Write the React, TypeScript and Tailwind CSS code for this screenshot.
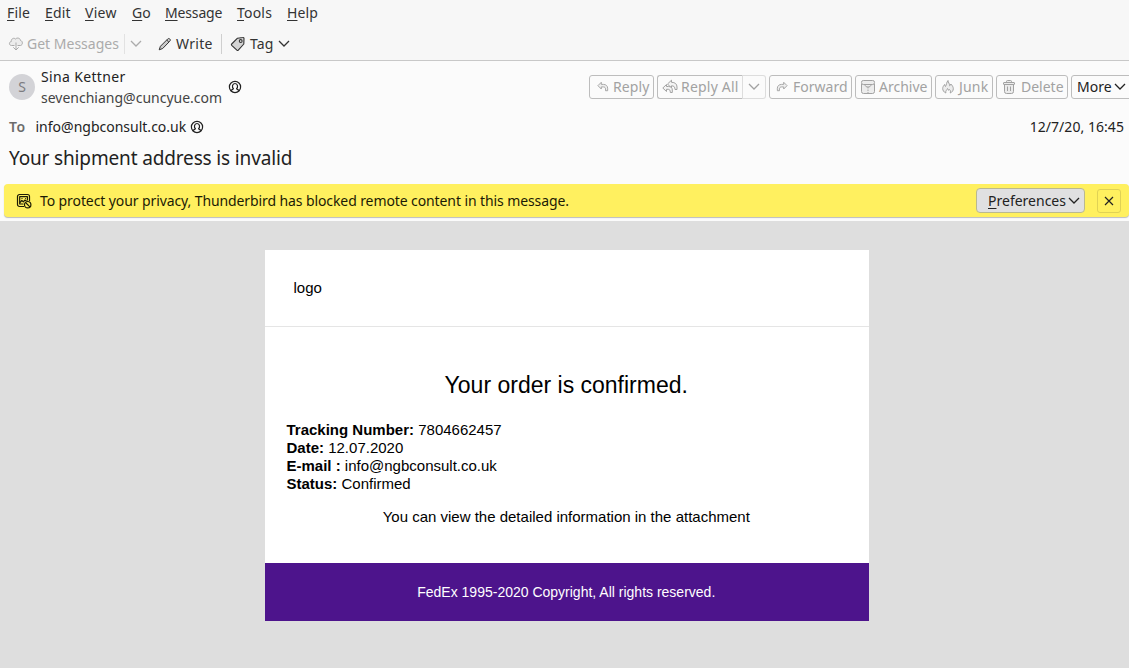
import React from "react";

type IconProps = { className?: string };

const Chevron = ({ className = "" }: IconProps) => (
  <svg viewBox="0 0 12 12" className={`h-3 w-3 shrink-0 ${className}`} fill="none" stroke="currentColor" strokeWidth="1.3">
    <path d="M1 3 6 8 11 3" />
  </svg>
);

const CloudDown = () => (
  <svg viewBox="0 0 16 16" className="h-4 w-4 shrink-0" fill="#ececec" stroke="currentColor" strokeWidth="1" strokeLinejoin="round">
    <path d="M6.500 9.500H3.500C.8 9.500.8 5.800 3.300 5.500 3 2.500 6 1.500 7.500 3 9.500 1 12.500 2.500 12.500 4.500 15 5 15 9 12.500 9.500H9.500" />
    <path d="M8 6.500v7.500M5.300 11.300 8 14l2.700-2.700" fill="none" />
  </svg>
);

const Pencil = () => (
  <svg viewBox="0 0 14 14" className="h-3.5 w-3.5 shrink-0" fill="#cccccc" stroke="currentColor" strokeWidth="1" strokeLinejoin="round">
    <path d="M1.200 12.800 2.400 9.300 9.500 2.200c.8-.9 1.700-.9 2.300-.2.700.6.700 1.500-.1 2.300L4.700 11.500ZM8.700 3l2.200 2.200" />
  </svg>
);

const TagIcon = () => (
  <svg viewBox="0 0 16 16" className="h-4 w-4 shrink-0" fill="#d4d4d4" stroke="currentColor" strokeWidth="1.100" strokeLinejoin="round">
    <path d="M7.500 2.200 12.800 1.500a1 1 0 0 1 1.200 1L13.800 8 8.300 14.200a1 1 0 0 1-1.400 0L1.700 9.400a1 1 0 0 1 0-1.400Z" />
    <circle cx="10.700" cy="5" r="1.400" fill="#f7f7f7" />
  </svg>
);

const Contact = () => (
  <svg viewBox="0 0 14 14" className="h-3.5 w-3.5 shrink-0" fill="none" stroke="#202020" strokeWidth="1.200">
    <circle cx="7" cy="7" r="5.600" />
    <path d="M2.800 10.700c.5-1.200 2.600-1 2.600-2.100C3.900 7.500 4 3.500 7 3.500s3.100 4 1.600 5.100c0 1.100 2.100.9 2.600 2.100" />
  </svg>
);

const replyShape = "M1 5.500 5 1.500v2.500h2.500C10.500 4 12.500 6 12.500 8.500V11.500H10V9.500c0-1.500-.8-2.500-2.500-2.500H5v2.500Z";

const Reply = () => (
  <svg viewBox="0 0 14 13" className="h-[11px] w-3 shrink-0" fill="#eeeeee" stroke="currentColor" strokeWidth="1.100" strokeLinejoin="round">
    <path d={replyShape} />
  </svg>
);

const Forward = () => (
  <svg viewBox="0 0 14 13" className="h-[11px] w-3 shrink-0" fill="#eeeeee" stroke="currentColor" strokeWidth="1.100" strokeLinejoin="round">
    <path d={replyShape} transform="matrix(-1 0 0 1 14 0)" />
  </svg>
);

const ReplyAll = () => (
  <svg viewBox="0 0 16 15" className="h-[15px] w-4 shrink-0" fill="#f4f4f4" stroke="currentColor" strokeLinejoin="round">
    <path d="M5.500 5 9.500 1.200V3.300C13 3.300 15 5 15 8v2.500h-2c0-2.500-1-3.700-3.500-3.700V9Z" />
    <path d="M.8 9 4.500 5.500v2H6.500c2.500 0 3.800 1.300 3.800 3.500V13.500H8.300c0-2.200-.6-3.200-2-3.200H4.500V12.500Z" />
  </svg>
);

const Archive = () => (
  <svg viewBox="0 0 16 16" className="h-4 w-4 shrink-0" fill="#ececec" stroke="currentColor" strokeLinejoin="round">
    <path d="M1.500 5v7.500a2 2 0 0 0 2 2h9a2 2 0 0 0 2-2V5" />
    <rect x="1.500" y="1.500" width="13" height="4" rx="1.800" />
    <path d="M5 5.500c0 2 1.500 2.500 3 2.500s3-.5 3-2.500" fill="none" />
    <path d="M8 8v6" strokeDasharray="1.500 1" />
  </svg>
);

const Flame = () => (
  <svg viewBox="0 0 14 16" className="h-4 w-3.5 shrink-0" fill="#ececec" stroke="currentColor" strokeLinejoin="round">
    <path d="M4.800 14C2.800 13 1.700 11.500 1.700 9.500c0-1.500.8-2.500 1.800-4 .2 1 .5 1.500 1 2C5.500 5.500 5.500 3.500 7 1.500c0 2 1.700 3 1.700 5.300.6-.3 1-1 1.100-1.800 1.500 1.500 2.500 3 2.500 4.700 0 2-1.200 3.500-3.100 4.300.6-1.700.2-2.700-.7-3.500-.4.600-.8.700-1.200.7 0-.8-.2-1.200-.8-1.700-.3 1.500-2.300 2.200-1.700 4.500Z" />
  </svg>
);

const Trash = () => (
  <svg viewBox="0 0 14 16" className="h-4 w-3.5 shrink-0" fill="#ececec" stroke="currentColor" strokeLinejoin="round">
    <path d="M4.500 3.500v-1a1 1 0 0 1 1-1h3a1 1 0 0 1 1 1v1M2.500 5.500v7a2 2 0 0 0 2 2h5a2 2 0 0 0 2-2v-7" />
    <rect x="1.500" y="3.500" width="11" height="2" rx=".5" />
    <path d="M5.500 7.500v4.500M8.500 7.500v4.500" />
  </svg>
);

const BlockedImage = () => (
  <svg viewBox="0 0 16 16" className="h-4 w-4 shrink-0" fill="none" stroke="#1c1b05" strokeWidth="1.200" strokeLinejoin="round">
    <path d="M8 13.500H3.500a2 2 0 0 1-2-2v-8a2 2 0 0 1 2-2h8a2 2 0 0 1 2 2V8" />
    <path d="M7.500 11H3.700V3.700h7.700V7.500" />
    <path d="m4 9.500 1.800-2 1.500 1.300L9 7l1.500 1M5.500 5.500h1M9 5.500h.8" />
    <circle cx="11.700" cy="11.700" r="3.200" />
    <path d="m9.500 9.500 4.400 4.400" />
  </svg>
);

const menus = [
  { label: "File", style: "w-[38px] tracking-[0.2px]" },
  { label: "Edit", style: "w-10 tracking-[0.2px]" },
  { label: "View", style: "w-[47px] tracking-[0.3px]" },
  { label: "Go", style: "w-[33px]" },
  { label: "Message", style: "w-[72px] tracking-[-0.15px]" },
  { label: "Tools", style: "w-[50px] tracking-[0.2px]" },
  { label: "Help", style: "w-10 tracking-[0.1px]" },
];

const Underlined = ({ text }: { text: string }) => (
  <>
    <span className="underline decoration-1 underline-offset-2">{text[0]}</span>
    {text.slice(1)}
  </>
);

const actionClass = "flex h-6 shrink-0 items-center whitespace-nowrap rounded-[3px] border border-[#bdbdbd] text-[#a2a2a2]";

const details = [
  ["Tracking Number:", "7804662457"],
  ["Date:", "12.07.2020"],
  ["E-mail :", "info@ngbconsult.co.uk"],
  ["Status:", "Confirmed"],
];

export default function App() {
  return (
    <div className="flex h-[668px] w-[1129px] flex-col overflow-hidden bg-[#dedede] font-['Noto_Sans',sans-serif] text-[14px] leading-5 text-[#333333]">
      <div className="h-[61px] shrink-0 border-b border-[#c8c8c8] bg-[#f7f7f7]">
        <nav className="flex h-[26px] items-center pl-[7px]">
          {menus.map((m) => (
            <span key={m.label} className={`${m.style} shrink-0 whitespace-nowrap`}>
              <Underlined text={m.label} />
            </span>
          ))}
        </nav>
        <div className="flex h-[35px] items-center whitespace-nowrap pl-2">
          <div className="flex w-[116px] shrink-0 items-center gap-[3px] text-[#ababab]">
            <CloudDown />
            <span>Get Messages</span>
          </div>
          <div className="flex h-5 w-[34px] shrink-0 items-center border-l border-[#e2e2e2] pl-[5px] text-[#ababab]">
            <Chevron />
          </div>
          <div className="flex h-5 w-[64px] shrink-0 items-center gap-1 border-r border-[#cfcfcf]">
            <Pencil />
            <span className="tracking-[0.3px]">Write</span>
          </div>
          <div className="flex items-center gap-1 pl-2">
            <TagIcon />
            <span className="w-[24px] tracking-[0.1px]">Tag</span>
            <Chevron />
          </div>
        </div>
      </div>

      <header className="flex h-[160px] shrink-0 flex-col bg-[#fbfbfb] text-[#222222]">
        <div className="flex h-[51px] items-center pl-[9px]">
          <div className="flex h-[26px] w-[26px] shrink-0 items-center justify-center rounded-full bg-[#d3d3d7] text-[#7c7c80]">S</div>
          <div className="ml-1.5 flex h-[42px] w-[187px] shrink-0 flex-col whitespace-nowrap">
            <span className="h-[21px] leading-[21px] tracking-[0.35px]">Sina Kettner</span>
            <span className="h-[21px] leading-[21px] text-[#444444]">sevenchiang@cuncyue.com</span>
          </div>
          <Contact />
          <div className="ml-[347px] flex gap-[3px]">
            <div className={`${actionClass} w-[65px] gap-1 pl-[7px]`}>
              <Reply />
              <span className="tracking-[0.1px]">Reply</span>
            </div>
            <div className="flex shrink-0">
              <div className={`${actionClass} w-[86px] gap-[3px] rounded-r-none border-r-[#dddddd] pl-1`}>
                <ReplyAll />
                <span className="tracking-[0.2px]">Reply All</span>
              </div>
              <div className="flex h-6 w-[23px] items-center rounded-r-[3px] border border-l-0 border-[#dddddd] pl-[5px] text-[#a2a2a2]">
                <Chevron />
              </div>
            </div>
            <div className={`${actionClass} w-[83px] gap-[5px] pl-1.5`}>
              <Forward />
              <span>Forward</span>
            </div>
            <div className={`${actionClass} w-[77px] gap-[3px] pl-1`}>
              <Archive />
              <span>Archive</span>
            </div>
            <div className={`${actionClass} w-[58px] gap-1 pl-[5px]`}>
              <Flame />
              <span className="tracking-[0.2px]">Junk</span>
            </div>
            <div className={`${actionClass} w-[72px] gap-[5px] pl-[5px]`}>
              <Trash />
              <span>Delete</span>
            </div>
            <div className="flex h-6 w-[64px] shrink-0 items-center rounded-[3px] border border-[#bdbdbd] pl-[5px] text-[#222222]">
              <span className="w-[37px]">More</span>
              <Chevron />
            </div>
          </div>
        </div>
        <div className="mt-[2px] flex h-[26px] items-center whitespace-nowrap pl-[9px] pr-[5px]">
          <span className="w-[26.5px] font-semibold tracking-[0.6px] text-[#6b6b6b]">To</span>
          <span className="w-[154.5px]">info@ngbconsult.co.uk</span>
          <Contact />
          <span className="ml-auto tracking-[0.05px]">12/7/20, 16:45</span>
        </div>
        <h1 className="h-[44px] whitespace-nowrap pl-[9px] text-[19px] leading-[37px] tracking-[-0.15px]">Your shipment address is invalid</h1>
        <div className="ml-1 flex h-[33px] items-center rounded bg-[#fff05f] pl-3 shadow-[0_1px_1px_#bcbcbc]">
          <BlockedImage />
          <span className="ml-2 whitespace-nowrap tracking-[-0.1px] text-[#1c1b05]">
            To protect your privacy, Thunderbird has blocked remote content in this message.
          </span>
          <div className="ml-auto flex h-[25px] w-[109px] shrink-0 items-center rounded-sm border border-[#bab98f] bg-[#e0e0e1] pl-[11px]">
            <span className="w-[80px] whitespace-nowrap">
              <Underlined text="Preferences" />
            </span>
            <Chevron />
          </div>
          <div className="ml-3 mr-2 flex h-6 w-6 shrink-0 items-center justify-center rounded-[3px] border border-[#e0d255]">
            <svg viewBox="0 0 10 10" className="h-2.5 w-2.5" stroke="#222222" strokeWidth="1.200">
              <path d="m1 1 8 8M9 1 1 9" />
            </svg>
          </div>
        </div>
      </header>

      <main className="ml-[265px] mt-[29px] h-[371px] w-[604px] shrink-0 bg-white font-['Liberation_Sans',Arial,sans-serif] text-[15px] leading-[18px] text-black">
        <div className="flex h-[77px] items-center border-b border-[#e5e5e5] pl-[28.5px]">logo</div>
        <div className="flex h-[236px] flex-col pl-[21.5px] pr-[23px] pt-[43px]">
          <h2 className="text-center text-[23px] leading-[30px]">Your order is confirmed.</h2>
          <div className="mt-[21px]">
            {details.map(([name, value]) => (
              <p key={name}>
                <b>{name}</b> {value}
              </p>
            ))}
          </div>
          <p className="mt-[15px] text-center">You can view the detailed information in the attachment</p>
        </div>
        <footer className="flex h-[58px] items-center justify-center bg-[#4d148c] pr-[1.5px] text-[14px] text-white">
          FedEx 1995-2020 Copyright, All rights reserved.
        </footer>
      </main>
    </div>
  );
}
